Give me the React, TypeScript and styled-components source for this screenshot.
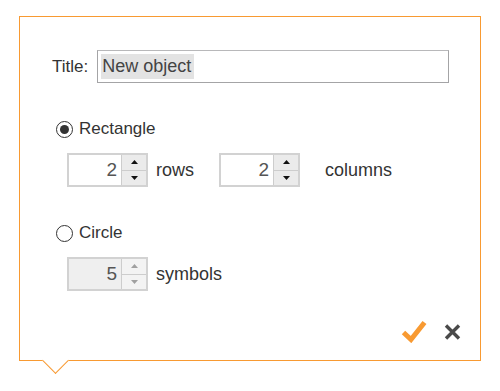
import styled, { createGlobalStyle } from "styled-components";

const GlobalStyle = createGlobalStyle`
  html, body {
    margin: 0;
    padding: 0;
    background: #ffffff;
  }
  body {
    font-family: "Liberation Sans", Arial, sans-serif;
    color: #333333;
  }
`;

const ORANGE = "#f89a32";

const Arrow: React.FC<{ up?: boolean; disabled?: boolean }> = ({ up, disabled }) => (
  <svg width="7" height="4" viewBox="0 0 7 4">
    <path
      d={up ? "M0 4 L3.5 0 L7 4 Z" : "M0 0 L3.5 4 L7 0 Z"}
      fill={disabled ? "#a0a0a0" : "#111"}
    />
  </svg>
);

const Spinner: React.FC<{ value: number; disabled?: boolean }> = ({
  value,
  disabled,
}) => (
  <SpinBox disabled={disabled}>
    <SpinValue>{value}</SpinValue>
    <SpinButtons>
      <SpinButton disabled={disabled}>
        <Arrow up disabled={disabled} />
      </SpinButton>
      <SpinButton disabled={disabled}>
        <Arrow disabled={disabled} />
      </SpinButton>
    </SpinButtons>
  </SpinBox>
);

const App: React.FC = () => {
  return (
    <>
      <GlobalStyle />
      <Page>
        <Dialog>
          <TitleRow>
            <Label>Title:</Label>
            <TitleInput>
              <Selected>New object</Selected>
            </TitleInput>
          </TitleRow>

          <RadioRow>
            <Radio checked />
            <Label>Rectangle</Label>
          </RadioRow>
          <FieldRow>
            <Spinner value={2} />
            <Unit>rows</Unit>
            <Spinner value={2} />
            <Unit wide>columns</Unit>
          </FieldRow>

          <RadioRow>
            <Radio />
            <Label>Circle</Label>
          </RadioRow>
          <FieldRow>
            <Spinner value={5} disabled />
            <Unit>symbols</Unit>
          </FieldRow>

          <Footer>
            <IconButton aria-label="ok">
              <svg width="26" height="23" viewBox="0 0 26 23">
                <path
                  d="M2.5 12.5 L10 19.5 L23.5 2.5"
                  fill="none"
                  stroke={ORANGE}
                  strokeWidth="5"
                />
              </svg>
            </IconButton>
            <IconButton aria-label="cancel">
              <svg width="17" height="16" viewBox="0 0 17 16">
                <path
                  d="M2 1.5 L15 14.5 M15 1.5 L2 14.5"
                  fill="none"
                  stroke="#4a4a4a"
                  strokeWidth="3.4"
                />
              </svg>
            </IconButton>
          </Footer>
          <Tail />
        </Dialog>
      </Page>
    </>
  );
};

const Page = styled.div`
  box-sizing: border-box;
  min-height: 391px;
  padding: 16px 0 0 19px;
`;

const Dialog = styled.div`
  position: relative;
  box-sizing: border-box;
  width: 462px;
  height: 345px;
  padding: 33px 19px 0 32px;
  border: 1px solid ${ORANGE};
  background: #fff;
  display: flex;
  flex-direction: column;
`;

const Tail = styled.div`
  position: absolute;
  left: 26px;
  bottom: -10px;
  width: 18px;
  height: 18px;
  background: #fff;
  border-right: 1px solid ${ORANGE};
  border-bottom: 1px solid ${ORANGE};
  transform: rotate(45deg);
`;

const TitleRow = styled.div`
  display: flex;
  align-items: center;
  gap: 9px;
`;

const Label = styled.span`
  font-size: 17px;
  color: #333;
`;

const TitleInput = styled.div`
  box-sizing: border-box;
  width: 352px;
  height: 33px;
  padding: 3px 3px;
  border: 1px solid #a4a4a6;
  border-top-color: #b8b8ba;
  display: flex;
  align-items: stretch;
`;

const Selected = styled.span`
  display: flex;
  align-items: center;
  padding: 0 3px 0 1px;
  background: #e3e3e3;
  font-size: 18px;
  color: #444;
`;

const RadioRow = styled.div`
  display: flex;
  align-items: center;
  gap: 6px;
  margin-top: 36px;
  padding-left: 4px;
  height: 20px;
`;

const Radio = styled.span<{ checked?: boolean }>`
  box-sizing: border-box;
  width: 17px;
  height: 17px;
  border-radius: 50%;
  border: 1.5px solid #333;
  display: flex;
  align-items: center;
  justify-content: center;

  &::after {
    content: "";
    width: 9px;
    height: 9px;
    border-radius: 50%;
    background: #333;
    display: ${({ checked }) => (checked ? "block" : "none")};
  }
`;

const FieldRow = styled.div`
  display: flex;
  align-items: center;
  margin-top: 14px;
  padding-left: 15px;
`;

const SpinBox = styled.div<{ disabled?: boolean }>`
  box-sizing: border-box;
  width: 81px;
  height: 34px;
  display: flex;
  border: 2px solid #d2d2d2;
  background: ${({ disabled }) => (disabled ? "#efefef" : "#fff")};
`;

const SpinValue = styled.span`
  flex: 1;
  display: flex;
  align-items: center;
  justify-content: flex-end;
  padding-right: 4px;
  font-size: 19px;
  color: #555;
`;

const SpinButtons = styled.div`
  width: 24px;
  display: flex;
  flex-direction: column;
  border-left: 1px solid #cdcdcd;
`;

const SpinButton = styled.div<{ disabled?: boolean }>`
  flex: 1;
  display: flex;
  align-items: center;
  justify-content: center;
  background: ${({ disabled }) => (disabled ? "#f3f3f3" : "#ebebeb")};

  & + & {
    border-top: 1px solid #cdcdcd;
  }
`;

const Unit = styled.span<{ wide?: boolean }>`
  font-size: 18px;
  color: #333;
  margin: 0 ${({ wide }) => (wide ? 0 : 25)}px 0 ${({ wide }) => (wide ? 25 : 8)}px;
`;

const Footer = styled.div`
  margin-top: auto;
  margin-bottom: 17px;
  display: flex;
  justify-content: flex-end;
  align-items: center;
  gap: 17px;
`;

const IconButton = styled.button`
  border: none;
  background: none;
  padding: 0;
  display: flex;
  cursor: pointer;
`;

export default App;
